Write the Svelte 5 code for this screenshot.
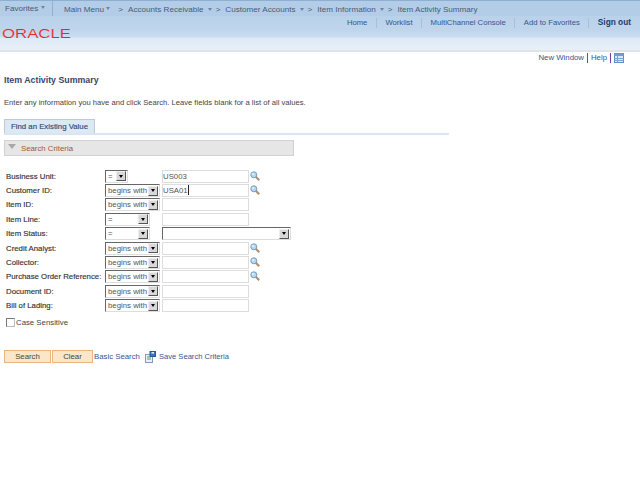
<script>
  const sep = ['Accounts Receivable', 'Customer Accounts', 'Item Information'];
  const headerLinks = ['Home', 'Worklist', 'MultiChannel Console', 'Add to Favorites'];
  const rows = [
    { label: 'Business Unit:', op: '=', opw: 'short', value: 'US003', lookup: true },
    { label: 'Customer ID:', op: 'begins with', opw: 'wide', value: 'USA01', lookup: true, caret: true },
    { label: 'Item ID:', op: 'begins with', opw: 'wide', value: '' },
    { label: 'Item Line:', op: '=', opw: 'mid', value: '' },
    { label: 'Item Status:', op: '=', opw: 'mid', dropdown: true },
    { label: 'Credit Analyst:', op: 'begins with', opw: 'wide', value: '', lookup: true },
    { label: 'Collector:', op: 'begins with', opw: 'wide', value: '', lookup: true },
    { label: 'Purchase Order Reference:', op: 'begins with', opw: 'wide', value: '', lookup: true },
    { label: 'Document ID:', op: 'begins with', opw: 'wide', value: '' },
    { label: 'Bill of Lading:', op: 'begins with', opw: 'wide', value: '' }
  ];
</script>

{#snippet lens()}
  <svg class="lens" width="10" height="10" viewBox="0 0 10 10">
    <line x1="5.8" y1="5.8" x2="9.2" y2="9.2" stroke="#b08a6a" stroke-width="2" />
    <circle cx="3.8" cy="3.8" r="3" fill="#b9d6f0" stroke="#6f9cc8" stroke-width="1" />
    <circle cx="3" cy="3" r="1" fill="#eef6fc" />
  </svg>
{/snippet}

{#snippet arrowBtn()}
  <span class="arrow"><span class="tri"></span></span>
{/snippet}

<div class="page">
  <nav class="menubar">
    <span class="fav">Favorites <i class="caret"></i></span>
    <span class="crumbs">
      <span class="main">Main Menu <i class="caret"></i></span>
      <span class="gt">&gt;</span>
      {#each sep as s}
        <span>{s}</span><i class="caret"></i><span class="gt">&gt;</span>
      {/each}
      <span>Item Activity Summary</span>
    </span>
  </nav>

  <header class="banner">
    <svg class="logo" width="72" height="16" viewBox="0 0 72 16">
      <text x="1" y="10.6" textLength="69" lengthAdjust="spacingAndGlyphs">ORACLE</text>
    </svg>
    <div class="links">
      {#each headerLinks as l}
        <span class="hl">{l}</span>
      {/each}
      <span class="signout">Sign out</span>
    </div>
  </header>

  <div class="tools">
    <span class="tl">New Window</span>
    <span class="tl">Help</span>
    <svg width="10" height="10" viewBox="0 0 10 10">
      <rect x="0.5" y="0.5" width="9" height="9" fill="#dbe8f6" stroke="#5b8ec4" />
      <rect x="0.5" y="0.5" width="9" height="2.5" fill="#6f9fd2" />
      <path d="M0.5 5.5H9.5M0.5 7.5H9.5M3.5 3V9.5" stroke="#7ea6d2" stroke-width="1" />
    </svg>
  </div>

  <main class="content">
    <h1>Item Activity Summary</h1>
    <p class="intro">Enter any information you have and click Search. Leave fields blank for a list of all values.</p>

    <div class="tabs"><span class="tab">Find an Existing Value</span></div>

    <div class="section"><i class="down"></i><span>Search Criteria</span></div>

    <div class="form">
      {#each rows as r}
        <label class="lbl" for={r.label}>{r.label}</label>
        <span class="select {r.opw}"><span class="sv">{r.op}</span>{@render arrowBtn()}</span>
        {#if r.dropdown}
          <span class="select status"><span class="sv"></span>{@render arrowBtn()}</span>
        {:else}
          <span class="cell">
            <span class="input" id={r.label}>{r.value}{#if r.caret}<b class="cur"></b>{/if}</span>
            {#if r.lookup}{@render lens()}{/if}
          </span>
        {/if}
      {/each}
    </div>

    <div class="case"><span class="box"></span>Case Sensitive</div>

    <div class="actions">
      <button class="btn search">Search</button>
      <button class="btn clear">Clear</button>
      <span class="link basic">Basic Search</span>
      <svg class="save" width="11" height="12" viewBox="0 0 11 12">
        <rect x="0.5" y="3.5" width="7" height="8" fill="#e8f0f8" stroke="#7f9cb8" />
        <path d="M2 6H6M2 8H6" stroke="#6a9a6a" />
        <rect x="5" y="0.5" width="5.5" height="5" fill="#3f74b8" stroke="#2a5a9a" />
        <rect x="6.5" y="1" width="2.5" height="1.6" fill="#dfeaf6" />
      </svg>
      <span class="link save-text">Save Search Criteria</span>
    </div>
  </main>
</div>

<style>
  :global(body) {
    margin: 0;
    background: #fff;
  }
  .page {
    width: 640px;
    height: 480px;
    overflow: hidden;
    font-family: "Liberation Sans", Arial, sans-serif;
    font-size: 7.8px;
    color: #333;
  }

  /* top menu */
  .menubar {
    height: 15px;
    display: flex;
    align-items: center;
    background: #b3cde8;
    border-top: 1px solid #8eb0d0;
    color: #4a5a72;
    font-size: 8.1px;
  }
  .fav {
    width: 53px;
    padding-left: 5px;
    box-sizing: border-box;
    height: 100%;
    line-height: 16px;
    border-right: 1px solid #8fb2d4;
  }
  .crumbs {
    display: flex;
    align-items: center;
    gap: 4px;
    padding-left: 11px;
    padding-top: 1px;
  }
  .main {
    margin-right: 4px;
  }
  .gt {
    margin-right: 1px;
  }
  .caret {
    display: inline-block;
    width: 0;
    height: 0;
    border: 2.5px solid transparent;
    border-top: 3px solid #6b86a8;
    border-bottom: 0;
    vertical-align: 2px;
  }

  .banner {
    height: 36px;
    box-sizing: border-box;
    border-bottom: 2px solid #dfe3ea;
    background: linear-gradient(#b9d1ea 0, #bfd5ec 14px, #cbdcef 21px, #dde9f6 22px, #e9f0f8 34px);
    display: flex;
    justify-content: space-between;
    position: relative;
  }
  .logo {
    margin-top: 11px;
    margin-left: 1px;
  }
  .logo text {
    font-family: "Liberation Sans", Arial, sans-serif;
    font-size: 12.2px;
    fill: #e8242c;
    stroke: #cfe0f2;
    stroke-width: 0.1;
  }
  .links {
    display: flex;
    align-items: flex-start;
    padding-top: 2px;
    color: #34558f;
    height: 12px;
    font-size: 7.7px;
  }
  .hl {
    padding: 0 8.5px;
    border-right: 1px solid #a7bfd8;
    line-height: 10px;
  }
  .signout {
    padding: 0 9px 0 8.5px;
    font-weight: bold;
    font-size: 8.3px;
    color: #1e3a6e;
    line-height: 9px;
  }

  .tools {
    display: flex;
    justify-content: flex-end;
    align-items: center;
    gap: 3px;
    height: 12px;
    padding-right: 16px;
    color: #34558f;
  }
  .tl {
    padding-right: 3px;
    border-right: 1px solid #7a3fa8;
    line-height: 10px;
  }

  .content {
    padding-left: 4px;
  }
  h1 {
    margin: 0;
    padding-top: 10px;
    font-size: 8.8px;
    line-height: 12px;
    color: #34466e;
    font-weight: bold;
  }
  .intro {
    margin: 11px 0 0;
    line-height: 12px;
    color: #444;
    font-size: 7.62px;
  }

  .tabs {
    margin-top: 10px;
    width: 445px;
    border-bottom: 2px solid #d9e6f2;
    height: 14px;
  }
  .tab {
    display: inline-block;
    height: 14px;
    line-height: 14px;
    padding: 0 6px;
    background: #dce9f5;
    border: 1px solid #c0c8d0;
    border-bottom: 0;
    box-sizing: border-box;
    color: #2e4a74;
    -webkit-text-stroke: 0.15px #2e4a74;
  }

  .section {
    margin-top: 5px;
    width: 290px;
    height: 16px;
    box-sizing: border-box;
    background: #e6e6e6;
    border: 1px solid #cfd3d6;
    display: flex;
    align-items: center;
    color: #a0573a;
    padding-left: 3px;
    gap: 5px;
  }
  .down {
    width: 0;
    height: 0;
    border: 4px solid transparent;
    border-top: 5px solid #a8a8a8;
    border-bottom: 0;
    margin-bottom: 3px;
  }

  .form {
    margin-top: 13px;
    margin-left: 2px;
    display: grid;
    grid-template-columns: 99px 56px auto;
    grid-auto-rows: 14.4px;
    align-items: center;
  }
  .lbl {
    color: #333;
    white-space: nowrap;
    -webkit-text-stroke: 0.15px #333;
  }
  .select {
    display: flex;
    align-items: center;
    box-sizing: border-box;
    height: 13px;
    background: #fff;
    border: 1px solid #666;
    border-right-color: #ddd;
    border-bottom-color: #ddd;
    color: #555;
    justify-content: space-between;
    padding-left: 2px;
  }
  .select.short { width: 23px; }
  .select.mid { width: 45px; }
  .select.wide { width: 55px; }
  .select.status {
    width: 129px;
    margin-left: 1px;
  }
  .sv {
    white-space: nowrap;
  }
  .arrow {
    width: 10px;
    height: 10px;
    background: #d8d8d8;
    border: 1px solid #555;
    border-top-color: #eee;
    border-left-color: #eee;
    box-sizing: border-box;
    display: flex;
    align-items: center;
    justify-content: center;
    margin-right: 1px;
  }
  .tri {
    width: 0;
    height: 0;
    border: 2.5px solid transparent;
    border-top: 3px solid #000;
    border-bottom: 0;
  }
  .cell {
    display: flex;
    align-items: center;
    gap: 1px;
    margin-left: 1px;
  }
  .input {
    width: 87px;
    height: 13px;
    box-sizing: border-box;
    border: 1px solid #ddd;
    background: #fff;
    line-height: 11px;
    color: #555;
    display: block;
  }
  .cur {
    display: inline-block;
    width: 1px;
    height: 10px;
    background: #222;
    vertical-align: -2px;
  }
  .lens {
    margin-bottom: 1px;
  }

  .case {
    margin: 4px 0 0 2px;
    height: 12px;
    display: flex;
    align-items: center;
    gap: 1px;
    color: #444;
  }
  .box {
    width: 7px;
    height: 7px;
    border: 1px solid #777;
    border-right-color: #bbb;
    border-bottom-color: #bbb;
    background: #fff;
  }

  .actions {
    margin-top: 21px;
    display: flex;
    align-items: center;
    height: 13px;
  }
  .btn {
    box-sizing: border-box;
    height: 13px;
    padding: 0;
    font: inherit;
    color: #444;
    background: #fbe6c8;
    border: 1px solid #eab67e;
  }
  .search { width: 47px; margin-right: 1px; }
  .clear { width: 41px; }
  .link { color: #34558f; }
  .basic { margin-left: 1px; }
  .save { margin: 1px 3px 0 5px; }
  .save-text { font-size: 7.6px; }
</style>
